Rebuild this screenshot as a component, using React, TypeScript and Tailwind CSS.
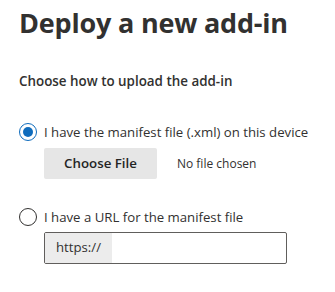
const font = { fontFamily: '"Open Sans", "Noto Sans", sans-serif' };

function Radio({ checked }: { checked?: boolean }) {
    return (
        <span
            className={
                "flex h-[18px] w-[18px] shrink-0 items-center justify-center rounded-full border " +
                (checked ? "border-[#0f6cbd]" : "border-[#323130]")
            }
        >
            {checked && <span className="h-[10px] w-[10px] rounded-full bg-[#0f6cbd]"></span>}
        </span>
    );
}

export default function App() {
    return (
        <div className="h-[292px] w-[335px] overflow-hidden bg-white pl-[19px] pt-[3px] text-[#323130]" style={font}>
            <h1 className="text-[27px] font-bold leading-[40px] tracking-[-0.2px]">Deploy a new add-in</h1>

            <div className="mt-[28px] text-[13.4px] font-semibold leading-[20px]">Choose how to upload the add-in</div>

            {/* option 1: file */}
            <label className="mt-[31px] flex items-center gap-[7px] text-[13.2px] leading-[20px]">
                <Radio checked />
                <span>I have the manifest file (.xml) on this device</span>
            </label>
            <div className="ml-[25px] mt-[6px] flex items-center">
                <button className="h-[31px] w-[113px] rounded-[2px] bg-[#e6e6e6] text-[13.3px] font-semibold text-[#242424]">
                    Choose File
                </button>
                <span className="ml-[20px] text-[12px]">No file chosen</span>
            </div>

            {/* option 2: url */}
            <label className="mt-[28px] flex items-center gap-[7px] text-[13.2px] leading-[20px]">
                <Radio />
                <span>I have a URL for the manifest file</span>
            </label>
            <div className="ml-[25px] mt-[5px] flex h-[32px] w-[243px] overflow-hidden rounded-[2px] border border-[#605e5c]">
                <span className="flex w-[67px] items-center bg-[#ececec] pl-[11px] text-[13.2px]">https://</span>
                <input className="min-w-0 flex-1 outline-none" />
            </div>
        </div>
    );
}
